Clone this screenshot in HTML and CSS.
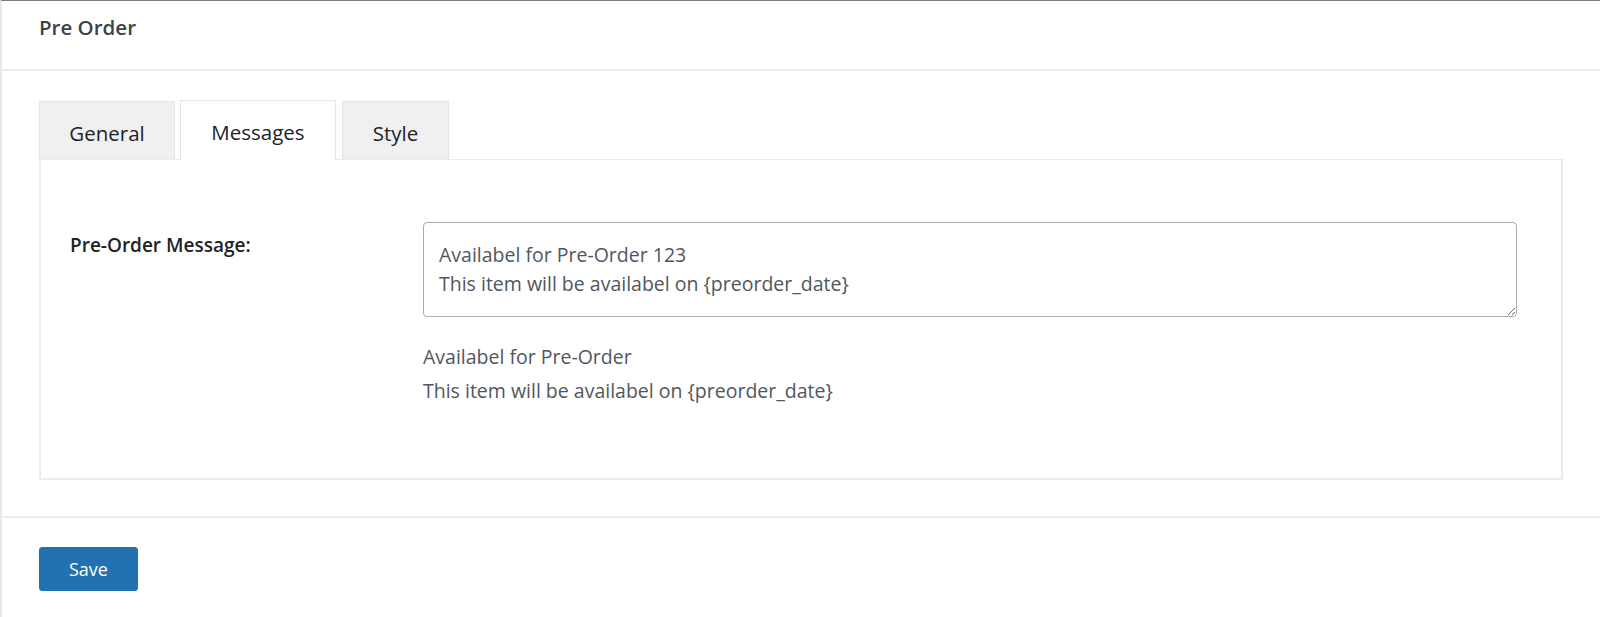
FILE: index.html
```html
<!DOCTYPE html>
<html>
<head>
<meta charset="utf-8">
<link rel="stylesheet" href="styles.css">
</head>
<body>
<div class="wrap">
  <div class="header"><h1 class="title">Pre Order</h1></div>
  <div class="content">
    <div class="tabs">
      <div class="tab tab-general">General</div>
      <div class="tab tab-messages active">Messages</div>
      <div class="tab tab-style">Style</div>
    </div>
    <div class="panel">
      <div class="row">
        <label class="label">Pre-Order Message:</label>
        <div class="field">
          <textarea class="textarea">Availabel for Pre-Order 123
This item will be availabel on {preorder_date}</textarea>
          <div class="desc">
            <p class="desc-line">Availabel for Pre-Order</p>
            <p class="desc-line">This item will be availabel on {preorder_date}</p>
          </div>
        </div>
      </div>
    </div>
  </div>
  <div class="footer"><button class="btn">Save</button></div>
</div>
</body>
</html>
```
FILE: styles.css
```css
* { box-sizing: border-box; }
html, body { margin: 0; padding: 0; background: #fff; }
body { font-family: "Open Sans", "Noto Sans", sans-serif; color: #1d2327; }
.wrap {
  height: 617px;
  border-top: 1px solid #7a7d80;
  border-left: 2px solid #e6e9ed;
}
.header {
  height: 70px;
  border-bottom: 2px solid #e9edf2;
  padding-left: 37px;
  display: flex;
  align-items: flex-start;
}
.title {
  margin: 0;
  padding-top: 12px;
  font-size: 20.5px;
  font-weight: 600;
  color: #3c434a;
  line-height: 28px;
}
.content { padding: 29px 37px 36px 37px; }
.tabs { display: flex; align-items: flex-end; height: 59px; }
.tab {
  height: 58px;
  background: #f0f0f0;
  border: 1px solid #e4e4e4;
  border-bottom: none;
  font-size: 20.5px;
  color: #1d2327;
  display: flex;
  align-items: center;
  justify-content: center;
  padding-top: 4px;
}
.tab-general { width: 136px; }
.tab-messages { width: 156px; margin-left: 5px; }
.tab-style { width: 107px; margin-left: 6px; }
.tab.active {
  background: #fff;
  height: 60px;
  margin-bottom: -1px;
  position: relative;
  z-index: 1;
  padding-top: 2px;
}
.panel {
  border: 2px solid #ebebeb;
  border-top-width: 1px;
  height: 321px;
  padding: 62px 44px 0 29px;
}
.row { display: flex; align-items: flex-start; }
.label {
  width: 353px;
  flex: none;
  font-size: 19px;
  font-weight: 600;
  color: #1d2327;
  padding-top: 10px;
  line-height: 26px;
}
.field { flex: 1; }
.textarea {
  display: block;
  width: 100%;
  height: 95px;
  border: 1px solid #a9acb0;
  border-radius: 4px;
  padding: 17px 15px 0 15px;
  font-family: inherit;
  font-size: 19.5px;
  line-height: 29px;
  color: #50575e;
  resize: vertical;
  margin: 0;
  overflow: hidden;
}
.desc { padding-top: 23px; }
.desc-line {
  margin: 0;
  font-size: 19.5px;
  line-height: 34px;
  color: #50575e;
}
.footer {
  border-top: 2px solid #e9edf2;
  padding: 29px 37px 0 37px;
}
.btn {
  width: 99px;
  height: 44px;
  background: #2271b1;
  border: 1px solid #2271b1;
  border-radius: 3px;
  color: #fff;
  font-family: inherit;
  font-size: 18px;
  padding: 0;
}
```
